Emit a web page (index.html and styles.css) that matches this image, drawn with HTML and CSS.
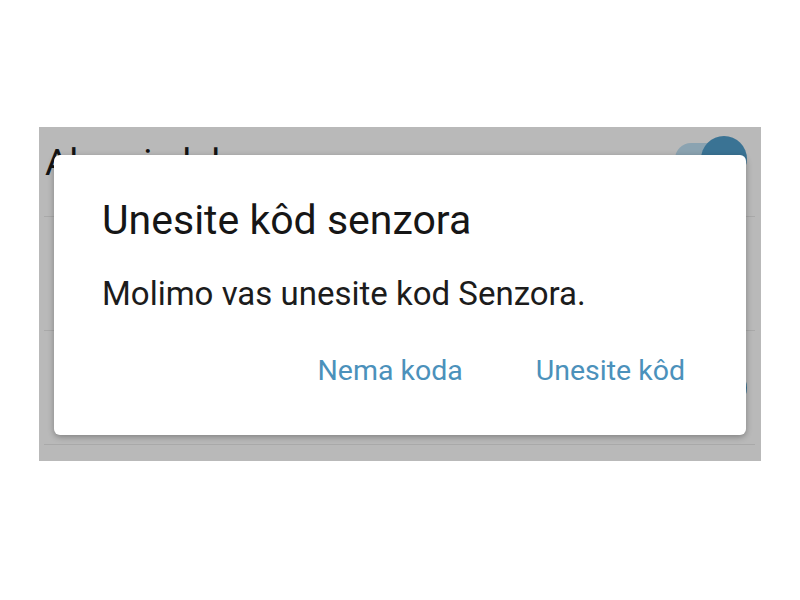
FILE: index.html
```html
<!DOCTYPE html>
<html lang="hr">
<head>
<meta charset="UTF-8">
<meta name="viewport" content="width=device-width, initial-scale=1.0">
<title>Unesite kôd senzora</title>
<link rel="stylesheet" href="styles.css">
</head>
<body>
<div class="screen">
    <div class="settings-list">
        <div class="setting-row first">
            <span class="setting-label">Alarmi glukoze</span>
            <span class="toggle"><span class="toggle-track"></span><span class="toggle-thumb"></span></span>
        </div>
        <div class="setting-row"></div>
        <div class="setting-row">
            <span class="setting-label"></span>
            <span class="toggle"><span class="toggle-track"></span><span class="toggle-thumb"></span></span>
        </div>
    </div>

    <div class="dialog">
        <h1 class="dialog-title">Unesite kôd senzora</h1>
        <p class="dialog-text">Molimo vas unesite kod Senzora.</p>
        <div class="dialog-actions">
            <button type="button">Nema koda</button>
            <button type="button">Unesite kôd</button>
        </div>
    </div>
</div>
</body>
</html>
```

FILE: styles.css
```css
body {
    margin: 0;
    background-color: #fff;
    font-family: Roboto, "Noto Sans", sans-serif;
}

.screen {
    position: relative;
    width: 722px;
    height: 334px;
    margin: 127px 0 0 39px;
    background-color: #b9b9b9;
    overflow: hidden;
}

.settings-list {
    display: flex;
    flex-direction: column;
}

.setting-row {
    display: flex;
    justify-content: space-between;
    align-items: center;
    height: 113px;
    margin: 0 6px 0 5px;
    border-bottom: 1px solid #a9a9a9;
}

.setting-row.first {
    height: 89px;
    align-items: flex-start;
}

.setting-label {
    margin-top: 14px;
    margin-left: 1px;
    font-size: 37px;
    color: #141414;
}

.toggle {
    position: relative;
    width: 72px;
    height: 46px;
    margin-right: 8px;
}

.setting-row.first .toggle {
    margin-top: 9px;
}

.toggle-track {
    position: absolute;
    left: 0;
    top: 7px;
    width: 64px;
    height: 32px;
    border-radius: 16px;
    background-color: #8ba3b1;
}

.toggle-thumb {
    position: absolute;
    right: 0;
    top: 0;
    width: 46px;
    height: 46px;
    border-radius: 50%;
    background-color: #3a7394;
}

.dialog {
    position: absolute;
    left: 15px;
    top: 28px;
    width: 692px;
    height: 280px;
    box-sizing: border-box;
    padding: 41px 61px 0 48px;
    background-color: #fff;
    border-radius: 6px;
    box-shadow: 0 2px 6px rgba(0, 0, 0, 0.3);
}

.dialog-title {
    margin: 0;
    font-size: 41px;
    font-weight: normal;
    color: #161616;
}

.dialog-text {
    margin: 30px 0 0;
    font-size: 33px;
    color: #1c1c1c;
}

.dialog-actions {
    display: flex;
    justify-content: flex-end;
    gap: 73px;
    margin-top: 41px;
}

.dialog-actions button {
    padding: 0;
    border: none;
    background: transparent;
    font-family: inherit;
    font-size: 28.5px;
    color: #4b91bb;
    cursor: pointer;
}
```
